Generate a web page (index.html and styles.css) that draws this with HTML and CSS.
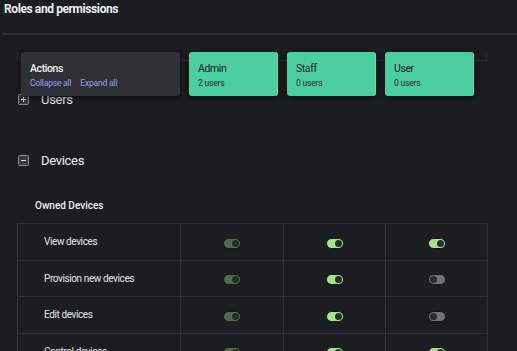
FILE: index.html
```html
<!DOCTYPE html>
<html>
<head>
<meta charset="utf-8">
<link rel="stylesheet" href="styles.css">
</head>
<body>
<h1 class="title">Roles and permissions</h1>
<div class="divider"></div>
<div class="role-strip">
  <div class="card card-actions">
    <div class="card-name">Actions</div>
    <div class="card-links"><a>Collapse all</a><a>Expand all</a></div>
  </div>
  <div class="card card-role">
    <div class="card-name">Admin</div>
    <div class="card-sub">2 users</div>
  </div>
  <div class="card card-role">
    <div class="card-name">Staff</div>
    <div class="card-sub">0 users</div>
  </div>
  <div class="card card-role">
    <div class="card-name">User</div>
    <div class="card-sub">0 users</div>
  </div>
</div>

<div class="section-head sec-users">
  <svg class="exp-icon" width="11" height="11" viewBox="0 0 11 11"><rect x="0.5" y="0.5" width="10" height="10" rx="1" fill="#3a3b40" stroke="#8d8e92"/><path d="M3 5.5h5M5.5 3v5" stroke="#d8d8da" stroke-width="1"/></svg>
  <span>Users</span>
</div>
<div class="section-head sec-devices">
  <svg class="exp-icon" width="11" height="11" viewBox="0 0 11 11"><rect x="0.5" y="0.5" width="10" height="10" rx="1" fill="#3a3b40" stroke="#8d8e92"/><path d="M3 5.5h5" stroke="#d8d8da" stroke-width="1"/></svg>
  <span>Devices</span>
</div>
<div class="sub-head">Owned Devices</div>
<table class="perm-table">
  <colgroup><col class="c-label"><col class="c-first"><col class="c-role"><col class="c-role"></colgroup>
  <tr>
    <td class="label">View devices</td>
    <td><span class="tg on-muted"></span></td>
    <td><span class="tg on"></span></td>
    <td><span class="tg on"></span></td>
  </tr>
  <tr>
    <td class="label">Provision new devices</td>
    <td><span class="tg on-muted"></span></td>
    <td><span class="tg on"></span></td>
    <td><span class="tg off"></span></td>
  </tr>
  <tr>
    <td class="label">Edit devices</td>
    <td><span class="tg on-muted"></span></td>
    <td><span class="tg on"></span></td>
    <td><span class="tg off"></span></td>
  </tr>
  <tr>
    <td class="label">Control devices</td>
    <td><span class="tg on-muted"></span></td>
    <td><span class="tg on"></span></td>
    <td><span class="tg on"></span></td>
  </tr>
</table>
</body>
</html>
```
FILE: styles.css
```css
html, body {
  margin: 0;
  padding: 0;
  background: #1c1d21;
  color: #e8e8ea;
  font-family: Roboto, "Liberation Sans", sans-serif;
  overflow: hidden;
  height: 351px;
}
.title {
  margin: 0;
  padding: 2px 0 0 4px;
  font-size: 12px;
  letter-spacing: -0.4px;
  font-weight: 700;
  line-height: 14px;
  color: #f0f0f2;
}
.divider {
  margin: 17px 0 0 3px;
  border-top: 2px solid #2e2f33;
}
.role-strip {
  margin: 17px 0 0 17px;
  width: 470px;
  box-sizing: border-box;
  height: 9px;
  border: 1px solid #2a2b30;
  border-top: none;
  display: flex;
  align-items: flex-start;
  gap: 9px;
  padding-left: 3px;
}
.card {
  position: relative;
  z-index: 2;
  flex: none;
  height: 44px;
  box-sizing: border-box;
  border-radius: 3px;
  padding: 9px 9px 0;
  box-shadow: 0 2px 6px rgba(0, 0, 0, 0.55);
}
.card-actions {
  width: 159px;
  background: #2f3035;
}
.card-role {
  width: 89px;
  background: #4bcfa0;
  color: #15201c;
  border-right: 1px solid #5fdcae;
}
.card-name {
  font-size: 10.5px;
  letter-spacing: -0.4px;
  line-height: 14px;
  padding-top: 1px;
}
.card-actions .card-name {
  font-weight: 500;
  color: #f0f0f2;
}
.card-links {
  margin-top: 2px;
  font-size: 8.5px;
  letter-spacing: -0.2px;
  line-height: 11px;
  display: flex;
  gap: 9px;
}
.card-links a {
  color: #8ea2e8;
}
.card-sub {
  margin-top: 2px;
  font-size: 8.5px;
  letter-spacing: -0.2px;
  line-height: 11px;
  color: #1f2a26;
}
.section-head {
  display: flex;
  align-items: center;
  gap: 12px;
  height: 24px;
  padding-left: 18px;
  font-size: 13px;
  letter-spacing: -0.3px;
  color: #ececee;
}
.exp-icon {
  flex: none;
}
.sec-users {
  margin-top: 26px;
}
.sec-devices {
  margin-top: 37px;
}
.sub-head {
  margin-top: 26px;
  padding-left: 35px;
  font-size: 10px;
  font-weight: 500;
  line-height: 16px;
  color: #f0f0f2;
}
.perm-table {
  margin: 9px 0 0 17px;
  width: 470px;
  border-collapse: collapse;
  table-layout: fixed;
}
.c-label { width: 163px; }
.c-first { width: 103px; }
.c-role { width: 102px; }
.perm-table td {
  border: 1px solid #2d2e33;
  height: 35.5px;
  padding: 0;
  text-align: center;
  vertical-align: middle;
}
.perm-table td.label {
  text-align: left;
  padding-left: 26px;
  font-size: 10px;
  letter-spacing: -0.4px;
  color: #e4e4e6;
}
.tg {
  display: inline-block;
  position: relative;
  width: 16px;
  height: 9px;
  border-radius: 6px;
  border: 1px solid #141517;
  vertical-align: middle;
}
.tg::after {
  content: "";
  position: absolute;
  top: 1px;
  width: 7px;
  height: 7px;
  border-radius: 50%;
  background: #2a2b2f;
}
.tg.on::after, .tg.on-muted::after { right: 1px; }
.tg.off::after { left: 1px; }
.tg.on { background: #a4e48c; }
.tg.on-muted { background: #4f6c49; }
.tg.off { background: #707075; }
```
